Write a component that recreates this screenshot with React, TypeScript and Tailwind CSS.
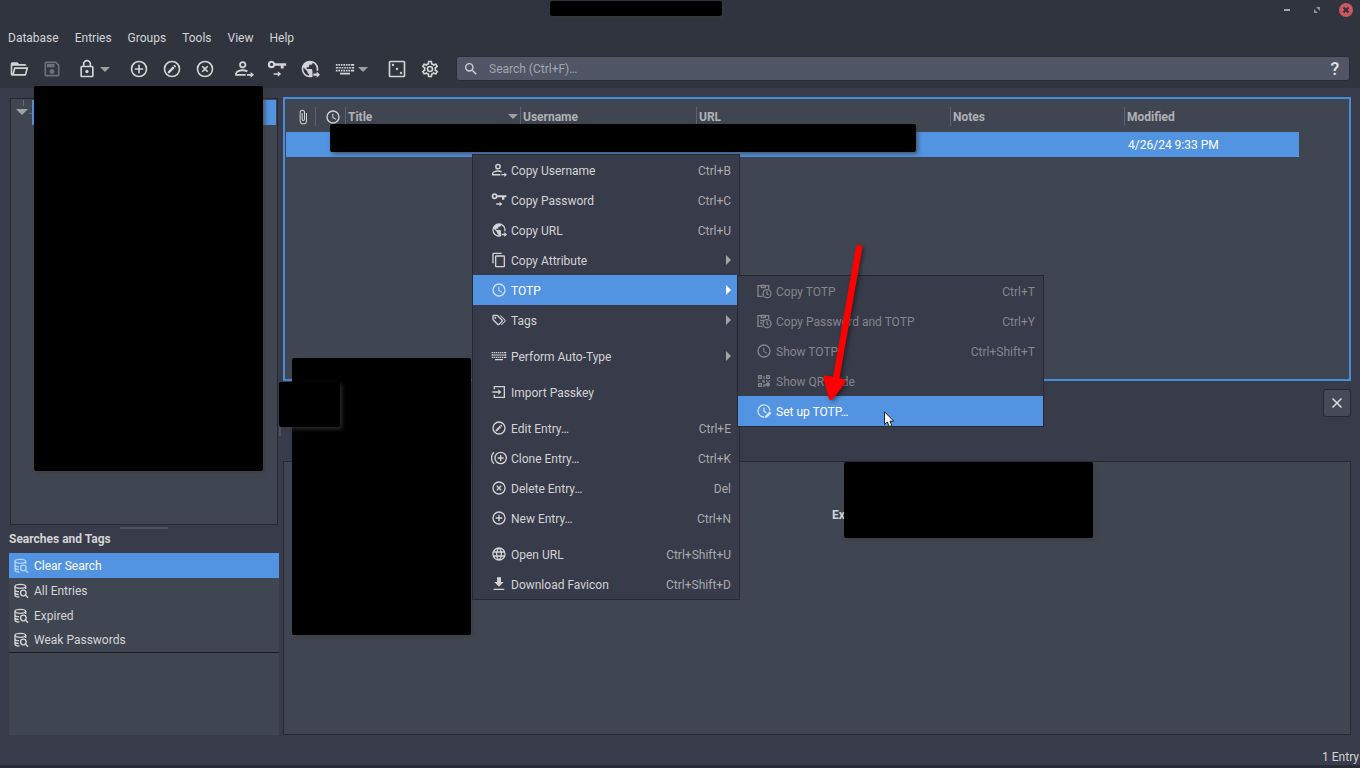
import React from "react";

type IconProps = { d?: string; className?: string; children?: React.ReactNode };

const Icon = ({ d, className = "size-5", children }: IconProps) => (
    <svg viewBox="0 0 24 24" fill="currentColor" fillRule="evenodd" className={`shrink-0 ${className}`} aria-hidden="true">
        {d && <path d={d} />}
        {children}
    </svg>
);

const RING = "M12,2A10,10 0 0,0 2,12A10,10 0 0,0 12,22A10,10 0 0,0 22,12A10,10 0 0,0 12,2M12,4A8,8 0 0,1 20,12A8,8 0 0,1 12,20A8,8 0 0,1 4,12A8,8 0 0,1 12,4";

const paths = {
    folder: "M6.1,10L4,18V8H21A2,2 0 0,0 19,6H12L10,4H4A2,2 0 0,0 2,6V18A2,2 0 0,0 4,20H19C19.9,20 20.7,19.4 20.9,18.5L23.2,10H6.1M19,18H6L7.6,12H20.6L19,18Z",
    save: "M17 3H5C3.89 3 3 3.9 3 5V19C3 20.1 3.89 21 5 21H19C20.1 21 21 20.1 21 19V7L17 3M19 19H5V5H16.17L19 7.83V19M12 12C10.34 12 9 13.34 9 15S10.34 18 12 18 15 16.66 15 15 13.66 12 12 12M6 6H15V10H6V6Z",
    lock: "M12,17C10.89,17 10,16.1 10,15C10,13.89 10.89,13 12,13A2,2 0 0,1 14,15A2,2 0 0,1 12,17M18,20V10H6V20H18M18,8A2,2 0 0,1 20,10V20A2,2 0 0,1 18,22H6C4.89,22 4,21.1 4,20V10C4,8.89 4.89,8 6,8H7V6A5,5 0 0,1 12,1A5,5 0 0,1 17,6V8H18M12,3A3,3 0 0,0 9,6V8H15V6A3,3 0 0,0 12,3Z",
    plus: RING + "M13,7H11V11H7V13H11V17H13V13H17V11H13V7Z",
    pencil: RING + "M15.1,7.07C14.96,7.07 14.82,7.12 14.71,7.23L13.7,8.23L15.77,10.3L16.78,9.3C17,9.08 17,8.72 16.78,8.51L15.5,7.23C15.38,7.12 15.24,7.07 15.1,7.07M13.12,8.81L7,14.93V17H9.07L15.19,10.87L13.12,8.81Z",
    cross: RING + "M14.59,8L12,10.59L9.41,8L8,9.41L10.59,12L8,14.59L9.41,16L12,13.41L14.59,16L16,14.59L13.41,12L16,9.41L14.59,8Z",
    clock: RING + "M12.5,7V12.25L17,14.92L16.25,16.15L11,13V7H12.5Z",
    cog: "M12,8A4,4 0 0,1 16,12A4,4 0 0,1 12,16A4,4 0 0,1 8,12A4,4 0 0,1 12,8M12,10A2,2 0 0,0 10,12A2,2 0 0,0 12,14A2,2 0 0,0 14,12A2,2 0 0,0 12,10M10,22C9.75,22 9.54,21.82 9.5,21.58L9.13,18.93C8.5,18.68 7.96,18.34 7.44,17.94L4.95,18.95C4.73,19.03 4.46,18.95 4.34,18.73L2.34,15.27C2.21,15.05 2.27,14.78 2.46,14.63L4.57,12.97L4.5,12L4.57,11L2.46,9.37C2.27,9.22 2.21,8.95 2.34,8.73L4.34,5.27C4.46,5.05 4.73,4.96 4.95,5.05L7.44,6.05C7.96,5.66 8.5,5.32 9.13,5.07L9.5,2.42C9.54,2.18 9.75,2 10,2H14C14.25,2 14.46,2.18 14.5,2.42L14.87,5.07C15.5,5.32 16.04,5.66 16.56,6.05L19.05,5.05C19.27,4.96 19.54,5.05 19.66,5.27L21.66,8.73C21.79,8.95 21.73,9.22 21.54,9.37L19.43,11L19.5,12L19.43,13L21.54,14.63C21.73,14.78 21.79,15.05 21.66,15.27L19.66,18.73C19.54,18.95 19.27,19.04 19.05,18.95L16.56,17.95C16.04,18.34 15.5,18.68 14.87,18.93L14.5,21.58C14.46,21.82 14.25,22 14,22H10M11.25,4L10.88,6.61C9.68,6.86 8.62,7.5 7.85,8.39L5.44,7.35L4.69,8.65L6.8,10.2C6.4,11.37 6.4,12.64 6.8,13.8L4.68,15.36L5.43,16.66L7.86,15.62C8.63,16.5 9.68,17.14 10.87,17.38L11.24,20H12.76L13.13,17.39C14.32,17.14 15.37,16.5 16.14,15.62L18.57,16.66L19.32,15.36L17.2,13.81C17.6,12.64 17.6,11.37 17.2,10.2L19.31,8.65L18.56,7.35L16.15,8.39C15.38,7.5 14.32,6.86 13.12,6.62L12.75,4H11.25Z",
    magnify: "M9.5,3A6.5,6.5 0 0,1 16,9.5C16,11.11 15.41,12.59 14.44,13.73L14.71,14H15.5L20.5,19L19,20.5L14,15.5V14.71L13.73,14.44C12.59,15.41 11.11,16 9.5,16A6.5,6.5 0 0,1 3,9.5A6.5,6.5 0 0,1 9.5,3M9.5,5C7,5 5,7 5,9.5C5,12 7,14 9.5,14C12,14 14,12 14,9.5C14,7 12,5 9.5,5Z",
    paperclip: "M16.5,6V17.5A4,4 0 0,1 12.5,21.5A4,4 0 0,1 8.5,17.5V5A2.5,2.5 0 0,1 11,2.5A2.5,2.5 0 0,1 13.5,5V15.5A1,1 0 0,1 12.5,16.5A1,1 0 0,1 11.5,15.5V6H10V15.5A2.5,2.5 0 0,0 12.5,18A2.5,2.5 0 0,0 15,15.5V5A4,4 0 0,0 11,1A4,4 0 0,0 7,5V17.5A5.5,5.5 0 0,0 12.5,23A5.5,5.5 0 0,0 18,17.5V6H16.5Z",
    copy: "M19,21H8V7H19M19,5H8A2,2 0 0,0 6,7V21A2,2 0 0,0 8,23H19A2,2 0 0,0 21,21V7A2,2 0 0,0 19,5M16,1H4A2,2 0 0,0 2,3V17H4V3H16V1Z",
    tags: "M6.5 10C7.3 10 8 9.3 8 8.5S7.3 7 6.5 7 5 7.7 5 8.5 5.7 10 6.5 10M9 6L16 13L11 18L4 11V6H9M9 4H4C2.9 4 2 4.9 2 6V11C2 11.6 2.2 12.1 2.6 12.4L9.6 19.4C9.9 19.8 10.4 20 11 20S12.1 19.8 12.4 19.4L17.4 14.4C17.8 14 18 13.5 18 13C18 12.4 17.8 11.9 17.4 11.6L10.4 4.6C10.1 4.2 9.6 4 9 4M13.5 5.7L14.5 4.7L21.4 11.6C21.8 12 22 12.5 22 13S21.8 14.1 21.4 14.4L16 19.8L15 18.8L20.7 13L13.5 5.7Z",
    web: "M16.36,14C16.44,13.34 16.5,12.68 16.5,12C16.5,11.32 16.44,10.66 16.36,10H19.74C19.9,10.64 20,11.31 20,12C20,12.69 19.9,13.36 19.74,14M14.59,19.56C15.19,18.45 15.65,17.25 15.97,16H18.92C17.96,17.65 16.43,18.93 14.59,19.56M14.34,14H9.66C9.56,13.34 9.5,12.68 9.5,12C9.5,11.32 9.56,10.65 9.66,10H14.34C14.43,10.65 14.5,11.32 14.5,12C14.5,12.68 14.43,13.34 14.34,14M12,19.96C11.17,18.76 10.5,17.43 10.09,16H13.91C13.5,17.43 12.83,18.76 12,19.96M8,8H5.08C6.03,6.34 7.57,5.06 9.4,4.44C8.8,5.55 8.35,6.75 8,8M5.08,16H8C8.35,17.25 8.8,18.45 9.4,19.56C7.57,18.93 6.03,17.65 5.08,16M4.26,14C4.1,13.36 4,12.69 4,12C4,11.31 4.1,10.64 4.26,10H7.64C7.56,10.66 7.5,11.32 7.5,12C7.5,12.68 7.56,13.34 7.64,14M12,4.03C12.83,5.23 13.5,6.57 13.91,8H10.09C10.5,6.57 11.17,5.23 12,4.03M18.92,8H15.97C15.65,6.75 15.19,5.55 14.59,4.44C16.43,5.07 17.96,6.34 18.92,8M12,2C6.47,2 2,6.5 2,12A10,10 0 0,0 12,22A10,10 0 0,0 22,12A10,10 0 0,0 12,2Z",
    download: "M4,21H20V19H4M19,9H15V2H9V9H5L12,16L19,9Z",
    qr: "M3,11H5V13H3V11M11,5H13V9H11V5M9,11H13V15H11V13H9V11M15,11H17V13H19V11H21V13H19V15H21V19H19V21H17V19H13V21H11V17H15V15H17V13H15V11M15,3H21V9H15V3M17,5V7H19V5H17M3,3H9V9H3V3M5,5V7H7V5H5M3,15H9V21H3V15M5,17V19H7V17H5Z",
};

const UserIcon = ({ className }: IconProps) => (
    <Icon className={className}>
        <g fill="none" stroke="currentColor" strokeWidth="2.2">
            <circle cx="10.5" cy="7" r="3.2" />
            <path d="M14 19H2.5V17.500C2.5 15 7 13.5 10.500 13.5C12.500 13.5 14.500 14 16 14.8" />
        </g>
        <path d="M15.500 18H20V15.6L24 19L20 22.4V20H15.500Z" />
    </Icon>
);

const KeyIcon = ({ className }: IconProps) => (
    <Icon className={className}>
        <path d="M5.5 2A4.5 4.5 0 0 0 5.5 11A4.5 4.5 0 0 0 9.8 8H16.500V11.5H20V8H23V5H9.8A4.5 4.5 0 0 0 5.5 2M5.5 4.6A1.9 1.9 0 0 1 5.5 8.4A1.9 1.9 0 0 1 5.5 4.6" />
        <path d="M8 17H13V14.8L17 18L13 21.2V19H8Z" />
    </Icon>
);

const EarthIcon = ({ className }: IconProps) => (
    <Icon className={className}>
        <path
            fillRule="nonzero"
            d="M15,4.59C17.93,5.77 20,8.64 20,12C20,12.7 19.9,13.4 19.7,14H21.8C21.9,13.3 22,12.7 22,12A10,10 0 1,0 12,22C13,22 14,21.8 15,21.5V16.5C15,15 15,13 14,12H8V10H10A1,1 0 0,0 11,9V7H13A2,2 0 0,0 15,5ZM11,19.93C7.05,19.44 4,16.08 4,12C4,11.38 4.08,10.78 4.21,10.21L9,15V16A2,2 0 0,0 11,18Z"
        />
        <path d="M16 17.5H20V15L24 18.8L20 22.5V20H16Z" />
    </Icon>
);

const KeyboardIcon = ({ className }: IconProps) => (
    <Icon
        className={className}
        d="M1 6H3V8H1ZM4 6H6V8H4ZM7 6H9V8H7ZM10 6H12V8H10ZM13 6H15V8H13ZM16 6H18V8H16ZM19 6H23V8H19ZM1 9.5H4V11.5H1ZM5 9.5H7V11.5H5ZM8 9.5H10V11.5H8ZM11 9.5H13V11.5H11ZM14 9.5H16V11.5H14ZM17 9.5H19V11.5H17ZM20 9.5H23V11.5H20ZM1 13H3V15H1ZM4 13H6V15H4ZM7 13H9V15H7ZM10 13H12V15H10ZM13 13H15V15H13ZM16 13H18V15H16ZM19 13H23V15H19ZM6 16.5H18V18.5H6Z"
    />
);

const DiceIcon = ({ className }: IconProps) => (
    <Icon className={className} d="M4 2H20A2 2 0 0 1 22 4V20A2 2 0 0 1 20 22H4A2 2 0 0 1 2 20V4A2 2 0 0 1 4 2M4 4V20H20V4Z">
        <circle cx="7.2" cy="7.2" r="1.4" />
        <circle cx="12" cy="12" r="1.4" />
        <circle cx="16.8" cy="16.8" r="1.4" />
    </Icon>
);

const ImportIcon = ({ className }: IconProps) => (
    <Icon className={className}>
        <path d="M5 8V4H20V20H5V16" fill="none" stroke="currentColor" strokeWidth="2" />
        <path d="M2 11H11V8L15.5 12L11 16V13H2Z" />
    </Icon>
);

const CloneIcon = ({ className }: IconProps) => (
    <Icon className={className}>
        <g fill="none" stroke="currentColor" strokeWidth="2">
            <circle cx="14.5" cy="12" r="8.5" />
            <path d="M14.5 7.5V16.5M10 12H19M4.5 3.5C-0.5 7.5 -0.5 16.5 4.5 20.5" />
        </g>
    </Icon>
);

const ClipboardClockIcon = ({ className, lines }: IconProps & { lines?: boolean }) => (
    <Icon className={className}>
        <g fill="none" stroke="currentColor" strokeWidth="2">
            <path d="M10 20H3V4H19V9" />
            <path d="M8 3.5H14V7H8Z" />
            <circle cx="16.5" cy="16" r="6" />
            <path d="M16.5 12.5V16.5L19 18" />
            {lines && <path d="M6 11H12M6 15H9" />}
        </g>
    </Icon>
);

const ClockEditIcon = ({ className }: IconProps) => (
    <Icon className={className}>
        <path d="M12.500 21C7 21.5 3 17 3 12A9 9 0 1 1 21 11.5M12 7V12.5L15.5 14.5" fill="none" stroke="currentColor" strokeWidth="2" />
        <path d="M13.5 19.5L20.5 12.5L23.3 15.3L16.3 22.3H13.5Z" />
    </Icon>
);

const DatabaseSearchIcon = ({ className }: IconProps) => (
    <Icon className={className}>
        <g fill="none" stroke="currentColor" strokeWidth="2">
            <ellipse cx="11" cy="5" rx="8" ry="3" />
            <path d="M3 5V18C3 20 6 21 9.5 21M3 10C3 11.5 6 12.8 9 12.9M3 14.5C3 16 5.5 17 8.5 17.2M19 5V9" />
            <circle cx="15.5" cy="15" r="4.2" />
            <path d="M18.5 18L22.5 22" />
        </g>
    </Icon>
);

const Caret = () => <span className="size-0 border-x-[5px] border-t-[5px] border-x-transparent border-t-[#a09f9c]" />;

const drawnIcons = {
    user: UserIcon,
    key: KeyIcon,
    earth: EarthIcon,
    keyboard: KeyboardIcon,
    dice: DiceIcon,
    import: ImportIcon,
    clone: CloneIcon,
    clip: ClipboardClockIcon,
    clipLines: (props: IconProps) => <ClipboardClockIcon {...props} lines />,
    clockEdit: ClockEditIcon,
    dbSearch: DatabaseSearchIcon,
};

type IconName = keyof typeof paths | keyof typeof drawnIcons;

const Glyph = ({ name, className }: { name: IconName; className?: string }) => {
    if (name in paths) return <Icon d={paths[name as keyof typeof paths]} className={className} />;
    const Drawn = drawnIcons[name as keyof typeof drawnIcons];
    return <Drawn className={className} />;
};

const ToolButton = ({ name, label, disabled }: { name: IconName; label: string; disabled?: boolean }) => (
    <button aria-label={label} disabled={disabled} className="flex h-[26px] w-[33px] items-center justify-center disabled:text-[#6c707c]">
        <Glyph name={name} />
    </button>
);

const DropButton = ({ name, label }: { name: IconName; label: string }) => (
    <button aria-label={label} className="flex h-[26px] items-center gap-[3px] px-[6px]">
        <Glyph name={name} />
        <Caret />
    </button>
);

type MenuEntry = { icon: IconName; label: string; keys?: string; sub?: boolean; active?: boolean; disabled?: boolean };

const entryMenu: MenuEntry[][] = [
    [
        { icon: "user", label: "Copy Username", keys: "Ctrl+B" },
        { icon: "key", label: "Copy Password", keys: "Ctrl+C" },
        { icon: "earth", label: "Copy URL", keys: "Ctrl+U" },
        { icon: "copy", label: "Copy Attribute", sub: true },
        { icon: "clock", label: "TOTP", sub: true, active: true },
        { icon: "tags", label: "Tags", sub: true },
    ],
    [{ icon: "keyboard", label: "Perform Auto-Type", sub: true }],
    [{ icon: "import", label: "Import Passkey" }],
    [
        { icon: "pencil", label: "Edit Entry…", keys: "Ctrl+E" },
        { icon: "clone", label: "Clone Entry…", keys: "Ctrl+K" },
        { icon: "cross", label: "Delete Entry…", keys: "Del" },
        { icon: "plus", label: "New Entry…", keys: "Ctrl+N" },
    ],
    [
        { icon: "web", label: "Open URL", keys: "Ctrl+Shift+U" },
        { icon: "download", label: "Download Favicon", keys: "Ctrl+Shift+D" },
    ],
];

const totpMenu: MenuEntry[] = [
    { icon: "clip", label: "Copy TOTP", keys: "Ctrl+T", disabled: true },
    { icon: "clipLines", label: "Copy Password and TOTP", keys: "Ctrl+Y", disabled: true },
    { icon: "clock", label: "Show TOTP", keys: "Ctrl+Shift+T", disabled: true },
    { icon: "qr", label: "Show QR Code", disabled: true },
    { icon: "clockEdit", label: "Set up TOTP…", active: true },
];

const MenuRow = ({ item }: { item: MenuEntry }) => (
    <button
        role="menuitem"
        disabled={item.disabled}
        className={`flex h-[30px] w-full items-center pr-2 pl-[18px] text-left ${
            item.active ? "bg-[#5294e2] text-white" : "text-[#d3d3d5] disabled:text-[#85868d]"
        }`}
    >
        <Glyph name={item.icon} className={`size-4 ${item.active ? "text-[#cfe2f8]" : ""}`} />
        <span className="ml-1 grow pt-[2px]">{item.label}</span>
        {item.keys && <span className={`pt-[2px] ${item.disabled ? "" : "text-[#a9aaaf]"}`}>{item.keys}</span>}
        {item.sub && (
            <span
                className={`size-0 border-y-[5px] border-l-[5px] border-y-transparent ${item.active ? "border-l-white" : "border-l-[#a3a3a5]"}`}
            />
        )}
    </button>
);

const columns: { label?: string; icon?: IconName; width: string; sorted?: boolean }[] = [
    { icon: "paperclip", width: "w-[30px]" },
    { icon: "clock", width: "w-[30px]" },
    { label: "Title", width: "w-[175px]", sorted: true },
    { label: "Username", width: "w-[176px]" },
    { label: "URL", width: "w-[254px]" },
    { label: "Notes", width: "w-[174px]" },
    { label: "Modified", width: "w-[174px]" },
];

const searches = ["Clear Search", "All Entries", "Expired", "Weak Passwords"];

const Redaction = ({ className }: { className: string }) => (
    <div className={`absolute rounded-[2px] bg-black shadow-[2px_2px_4px_rgba(60,60,60,0.7)] ${className}`} />
);

const TitleBar = () => (
    <div className="relative flex h-5 items-center justify-end">
        <button aria-label="Minimize" className="flex h-5 w-[30px] items-center justify-center">
            <span className="h-[2px] w-[6px] bg-[#a5a7ad]" />
        </button>
        <button aria-label="Restore" className="flex h-5 w-[30px] items-center justify-center">
            <svg viewBox="0 0 6 6" className="size-[6px]" fill="#90939b">
                <path d="M2 0H6V4ZM0 2V6H4Z" />
            </svg>
        </button>
        <button aria-label="Close" className="flex h-5 w-7 items-center justify-center">
            <svg viewBox="0 0 14 14" className="size-[14px]">
                <circle cx="7" cy="7" r="7" fill="#cc575d" />
                <path d="M4.5 4.5L9.5 9.5M9.5 4.5L4.5 9.5" stroke="#2f343f" strokeWidth="2" />
            </svg>
        </button>
        <Redaction className="top-px left-[550px] h-[15px] w-[172px]" />
    </div>
);

const Toolbar = () => (
    <div className="flex h-8 items-start pr-[10px] pl-[2px]">
        <ToolButton name="folder" label="Open database" />
        <ToolButton name="save" label="Save database" disabled />
        <div className="ml-[3px] flex">
            <DropButton name="lock" label="Lock database" />
        </div>
        <div className="ml-[6px] flex">
            <ToolButton name="plus" label="New entry" />
            <ToolButton name="pencil" label="Edit entry" />
            <ToolButton name="cross" label="Delete entry" />
        </div>
        <div className="ml-[6px] flex">
            <ToolButton name="user" label="Copy username" />
            <ToolButton name="key" label="Copy password" />
            <ToolButton name="earth" label="Copy URL" />
        </div>
        <div className="ml-[3px] flex">
            <DropButton name="keyboard" label="Perform auto-type" />
        </div>
        <div className="ml-[6px] flex">
            <ToolButton name="dice" label="Password generator" />
            <ToolButton name="cog" label="Settings" />
        </div>
        <div className="ml-[10px] flex h-[25px] grow items-center rounded-[3px] border border-[#2a2d38] bg-[#505666] pr-[5px] pl-[6px]">
            <Glyph name="magnify" className="size-4" />
            <input
                type="text"
                aria-label="Search"
                placeholder="Search (Ctrl+F)…"
                className="ml-[10px] min-w-0 grow bg-transparent outline-none placeholder:text-[#a2a5ad]"
            />
            <button aria-label="Search help" className="w-[18px] text-center text-[18px] leading-5 font-medium text-[#e0e0e2]">
                ?
            </button>
        </div>
    </div>
);

const Sidebar = () => (
    <aside className="flex w-[270px] shrink-0 flex-col">
        <div className="mx-px mt-[10px] flex grow border border-[#262932] bg-[#404651]">
            <div className="relative flex h-[25px] w-[21px] items-center justify-center">
                <span className="absolute top-px left-3 h-[6px] w-px bg-[#676b78]" />
                <span className="border-x-[6px] border-t-[6px] border-x-transparent border-t-[#a3a3a5]" />
                <span className="absolute top-[14px] right-0 h-px w-[3px] bg-[#676b78]" />
            </div>
            <div className="mt-px mr-px h-[25px] grow bg-[#5294e2]" />
        </div>
        <div className="mx-auto mt-[2px] h-[2px] w-12 bg-[#505361]" />
        <h2 className="h-6 leading-5 font-bold">Searches and Tags</h2>
        <div className="h-[182px] bg-[#404651]">
            <ul className="border-b border-[#1b1c20]">
                {searches.map((name, i) => (
                    <li key={name}>
                        <button
                            className={`flex w-full items-center gap-[5px] pl-1 text-left ${i === 0 ? "bg-[#5294e2] text-white" : ""} ${
                                i === searches.length - 1 ? "h-6" : "h-[25px]"
                            }`}
                        >
                            <Glyph name="dbSearch" className={`size-4 ${i === 0 ? "text-[#b5d3f5]" : ""}`} />
                            {name}
                        </button>
                    </li>
                ))}
            </ul>
        </div>
    </aside>
);

const EntryList = () => (
    <div className="mt-[9px] h-[284px] shrink-0 overflow-hidden border-2 border-[#478bd9] bg-[#404651] pl-px">
        <table className="w-[1013px] table-fixed border-collapse">
            <thead>
                <tr>
                    {columns.map((col, i) => (
                        <th key={i} className={`h-[33px] p-0 text-left align-bottom text-[#b0b1b5] ${col.width}`}>
                            <div
                                className={`mb-[6px] flex h-[19px] items-center ${i < columns.length - 1 ? "border-r border-[#5e626d]" : ""} ${
                                    col.icon ? "justify-center pl-1" : "justify-between px-[2px]"
                                }`}
                            >
                                {col.icon && <Glyph name={col.icon} className="size-4 text-[#d3d3d5]" />}
                                {col.label}
                                {col.sorted && <Caret />}
                            </div>
                        </th>
                    ))}
                </tr>
            </thead>
            <tbody>
                <tr className="h-[25px] bg-[#5294e2] text-white">
                    <td colSpan={6} className="p-0" />
                    <td className="p-0 pl-[3px]">4/26/24 9:33 PM</td>
                </tr>
            </tbody>
        </table>
    </div>
);

const Preview = () => (
    <>
        <div className="flex h-20 shrink-0 justify-end pt-2">
            <button aria-label="Close preview" className="flex size-7 items-center justify-center rounded-[3px] border border-[#262932] bg-[#444a58]">
                <svg viewBox="0 0 10 10" className="size-[10px]" stroke="#dcdcde" strokeWidth="1.5">
                    <path d="M0.5 0.5L9.5 9.5M9.5 0.5L0.5 9.5" />
                </svg>
            </button>
        </div>
        <div className="grow border border-[#262932] bg-[#404651] pt-[43px] pl-[548px] leading-5 font-bold">Ex</div>
    </>
);

const ContextMenu = () => (
    <div role="menu" className="absolute top-[154px] left-[472px] w-[268px] border border-[#262932] bg-[#383b49]">
        {entryMenu.map((group, i) => (
            <div key={i} className={i > 0 ? "mt-[6px]" : ""}>
                {group.map((item) => (
                    <MenuRow key={item.label} item={item} />
                ))}
            </div>
        ))}
        <div role="menu" className="absolute top-[120px] left-[264px] w-[307px] border border-[#262932] bg-[#383b49]">
            {totpMenu.map((item) => (
                <MenuRow key={item.label} item={item} />
            ))}
        </div>
    </div>
);

const Pointers = () => (
    <>
        <svg viewBox="0 0 50 170" className="pointer-events-none absolute top-[240px] left-[820px] h-[170px] w-[50px] drop-shadow-[2px_2px_2px_rgba(0,0,0,0.4)]">
            <g fill="red" stroke="red" strokeLinecap="round" strokeLinejoin="round">
                <path d="M39 8L15 145" strokeWidth="6.5" />
                <path d="M6 138L23 141.5L11 157.5Z" strokeWidth="5" />
            </g>
        </svg>
        <svg viewBox="0 0 11 18" className="pointer-events-none absolute top-[411px] left-[884px] h-[18px] w-[11px]">
            <path d="M0.5 0.8V13.5L3.3 11L5.3 15.5L7.8 14.5L6 10.2H9.8Z" fill="white" stroke="#222" strokeWidth="1" />
        </svg>
    </>
);

const App = () => {
    return (
        <div className="relative flex min-h-screen flex-col overflow-hidden border-b-[3px] border-[#292b35] bg-[#383b49] font-[Roboto,sans-serif] text-[12px] leading-4 text-[#d3d3d5]">
            <header className="bg-[#2f343f]">
                <TitleBar />
                <nav className="flex h-9 items-center">
                    {["Database", "Entries", "Groups", "Tools", "View", "Help"].map((name) => (
                        <button key={name} className="px-2">
                            {name}
                        </button>
                    ))}
                </nav>
                <Toolbar />
            </header>
            <main className="flex grow px-[9px]">
                <Sidebar />
                <div className="flex w-1 shrink-0 items-center">
                    <span className="h-12 w-[2px] bg-[#505361]" />
                </div>
                <section className="flex min-w-0 grow flex-col">
                    <EntryList />
                    <Preview />
                </section>
            </main>
            <footer className="flex h-[30px] items-end justify-end pr-px">1 Entry</footer>

            <Redaction className="top-[86px] left-[34px] h-[385px] w-[229px]" />
            <Redaction className="top-[124px] left-[330px] h-[28px] w-[586px]" />
            <Redaction className="top-[358px] left-[292px] h-[277px] w-[179px]" />
            <Redaction className="top-[382px] left-[279px] h-[45px] w-[61px]" />
            <Redaction className="top-[462px] left-[844px] h-[76px] w-[249px]" />
            <ContextMenu />
            <Pointers />
        </div>
    );
};

export default App;
